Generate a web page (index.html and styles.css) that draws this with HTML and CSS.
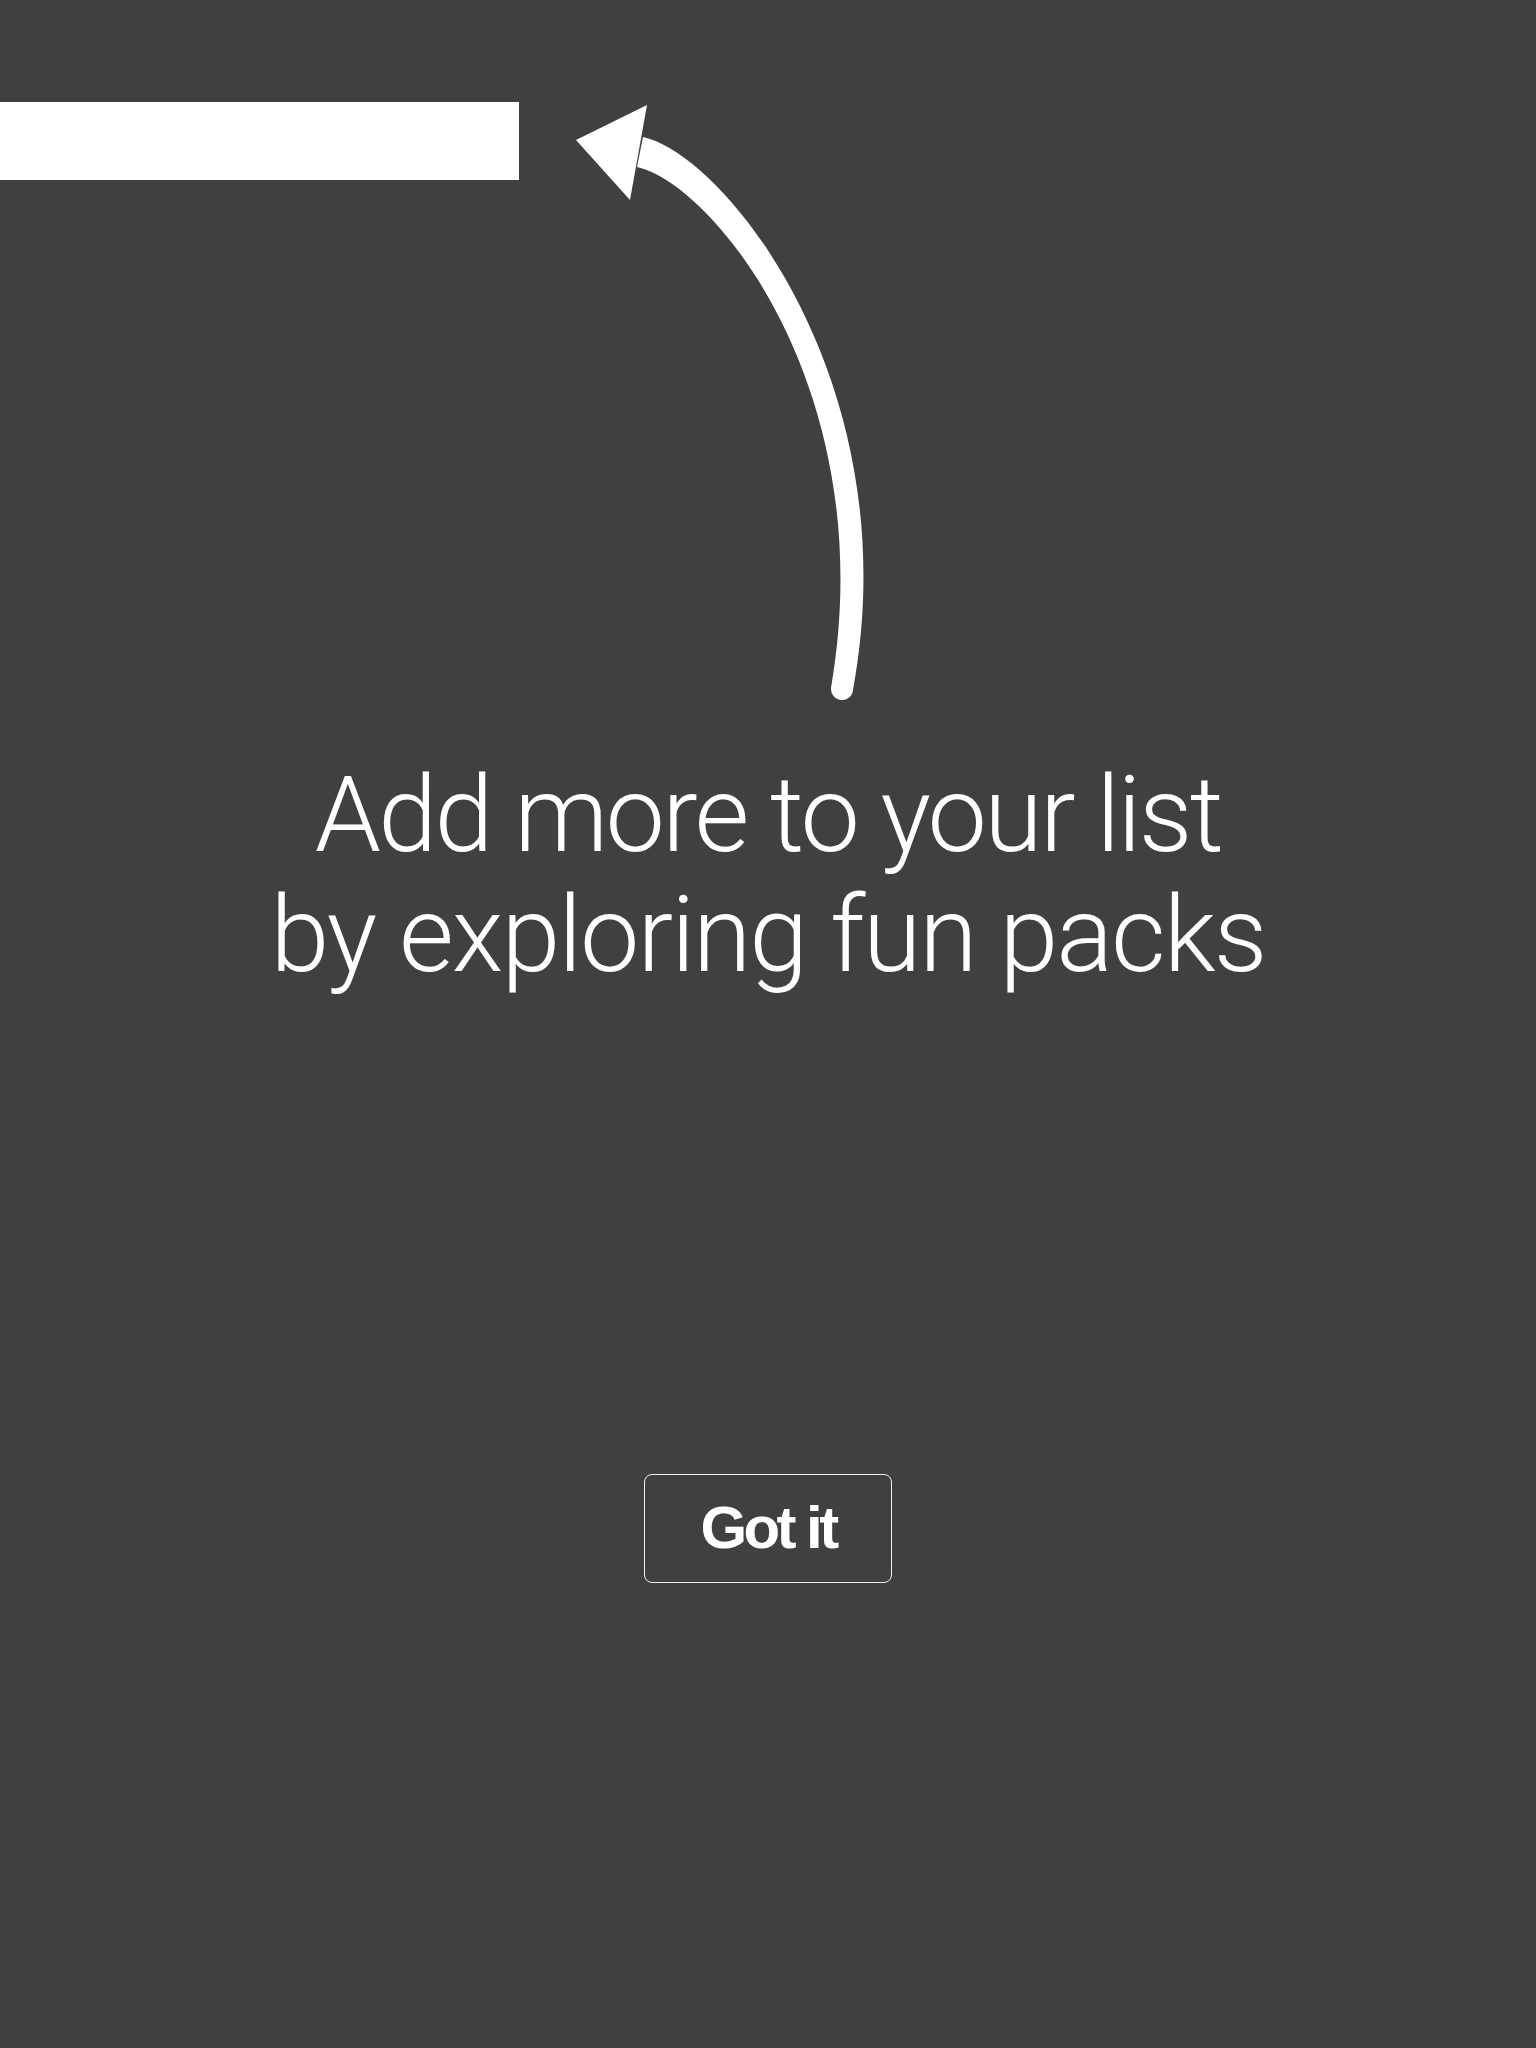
FILE: index.html
```html
<!DOCTYPE html>
<html lang="en">
<head>
    <meta charset="UTF-8">
    <meta name="viewport" content="width=device-width, initial-scale=1.0">
    <title>Explore packs</title>
    <link rel="stylesheet" href="styles.css">
</head>
<body>
    <div class="top">
        <div class="tab"></div>
        <svg class="arrow" width="320" height="620" viewBox="0 0 320 620">
            <!-- tapered shaft, thicker near the head -->
            <path d="M 79 47 C 162 65, 345 296, 289 600 A 11 11 0 0 1 267 598 C 318 302, 150 94, 73 77 Z" fill="#fff"/>
            <polygon points="12,50 83,15 66,110" fill="#fff"/>
        </svg>
    </div>
    <div class="hint">
        <p>Add more to your list</p>
        <p>by exploring fun packs</p>
    </div>
    <div class="actions">
        <button type="button" class="got-it">Got it</button>
    </div>
</body>
</html>
```

FILE: styles.css
```css
body {
    margin: 0;
    background-color: #404040;
    font-family: 'Liberation Sans', Arial, sans-serif;
    color: #fff;
    height: 2048px;
}

.top {
    display: flex;
    align-items: flex-start;
    height: 710px;
}

.tab {
    width: 519px;
    height: 78px;
    margin-top: 102px;
    background-color: #fff;
}

.arrow {
    display: block;
    margin-left: 45px;
    margin-top: 90px;
}

.hint {
    text-align: center;
    font-family: 'Roboto', 'Liberation Sans', sans-serif;
    font-weight: 300;
    font-size: 106px;
    line-height: 120px;
    letter-spacing: -2px;
    margin-top: 45px;
}

.hint p {
    margin: 0;
}

.hint p:first-child {
    letter-spacing: -2.6px;
}

.actions {
    display: flex;
    justify-content: center;
    margin-top: 479px;
}

.got-it {
    width: 248px;
    height: 109px;
    background: transparent;
    border: 1px solid #f2f2f2;
    border-radius: 8px;
    color: #fff;
    font-family: 'Liberation Sans', Arial, sans-serif;
    font-weight: 700;
    font-size: 60px;
    letter-spacing: -3.6px;
    padding: 0 0 2px;
    cursor: pointer;
}
```
